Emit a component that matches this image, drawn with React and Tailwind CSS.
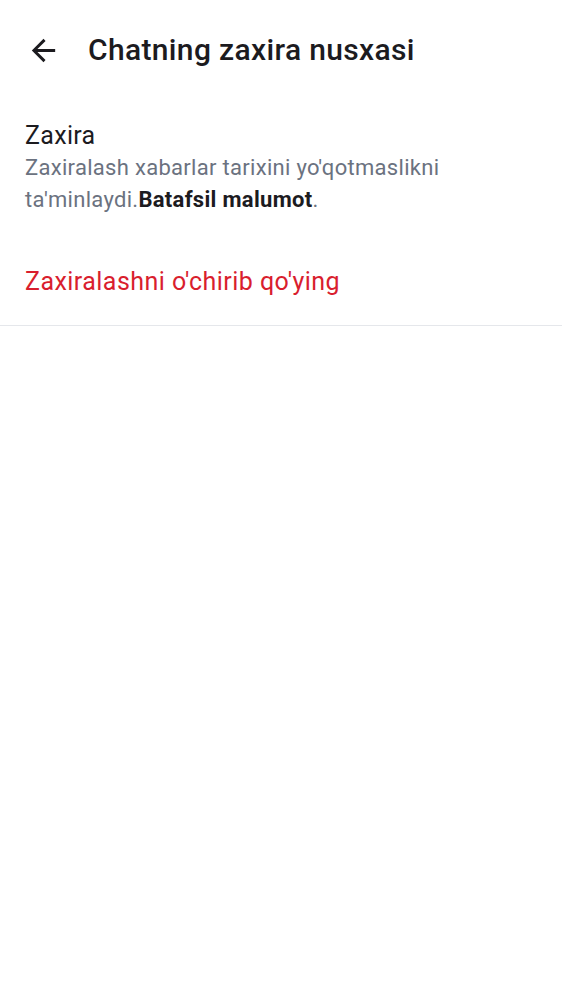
import { MdArrowBack } from 'react-icons/md'

function App() {
  return (
    <div className="min-h-screen bg-white font-['Roboto',sans-serif] text-[#1c1b1f]">
      <header className="flex items-center h-[100px] pl-[26px]">
        <MdArrowBack size={35} className="text-[#1c1b1f]" />
        <h1 className="ml-[27px] text-[30px] font-medium leading-none tracking-[0.35px]">
          Chatning zaxira nusxasi
        </h1>
      </header>

      <section className="px-[25px] pt-[21px]">
        <div className="text-[25px] leading-[30px] tracking-[0.3px]">Zaxira</div>
        <p className="mt-[1px] text-[22px] leading-[32px] tracking-[0.3px] text-[#6b7280] max-w-[470px]">
          Zaxiralash xabarlar tarixini yo'qotmaslikni ta'minlaydi.
          <span className="font-bold text-[#1c1b1f]">Batafsil malumot</span>.
        </p>
      </section>

      <button className="block w-full text-left px-[25px] pt-[51px] pb-[28px] text-[25px] leading-[30px] tracking-[0.45px] text-[#d91e2e]">
        Zaxiralashni o'chirib qo'ying
      </button>
      <div className="h-px bg-[#e5e7eb]" />
    </div>
  )
}

export default App
